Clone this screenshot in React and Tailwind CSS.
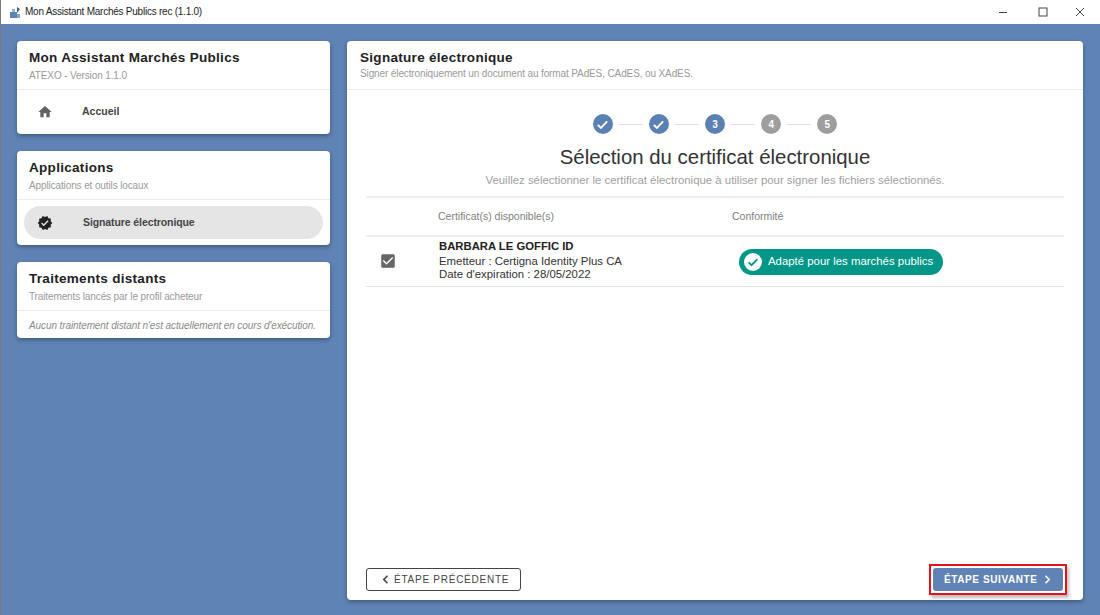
import { useState } from 'react';
import { MdHome, MdVerified, MdCheckBox } from 'react-icons/md';

const steps = [
  { label: '1', done: true },
  { label: '2', done: true },
  { label: '3', active: true },
  { label: '4' },
  { label: '5' },
];

function CardHead({ title, sub }) {
  return (
    <div className="h-[49px] px-3 pt-[8px] border-b border-[#ececec]">
      <p className="text-[13.5px] leading-[18px] font-bold tracking-[0.3px] text-[#222]">{title}</p>
      <p className="text-[10px] leading-[14px] mt-[2px] tracking-[-0.12px] text-[#9a9a9a]">{sub}</p>
    </div>
  );
}

function Check({ size, className }) {
  return (
    <svg width={size} height={size} viewBox="0 0 24 24" className={className}>
      <path d="M4.5 12.5 L9.5 17.5 L19.5 7" fill="none" stroke="currentColor" strokeWidth="3" />
    </svg>
  );
}

function Stepper() {
  return (
    <div className="flex items-center justify-center h-5">
      {steps.map((s, i) => (
        <div key={s.label} className="flex items-center">
          {i > 0 && <div className="w-[24px] mx-[6.1px] h-px bg-[#e0e0e0]" />}
          <div className={`w-5 h-5 rounded-full flex items-center justify-center text-white text-[10px] font-bold ${s.done || s.active ? 'bg-[#5b80b4]' : 'bg-[#9e9e9e]'}`}>
            {s.done ? <Check size={15} /> : s.label}
          </div>
        </div>
      ))}
    </div>
  );
}

function Chevron({ dir }) {
  return (
    <svg width="7" height="9" viewBox="0 0 7 9" className="shrink-0">
      <path d={dir === 'left' ? 'M5.5 .8 L1.8 4.5 L5.5 8.2' : 'M1.5 .8 L5.2 4.5 L1.5 8.2'} fill="none" stroke="currentColor" strokeWidth="1.6" />
    </svg>
  );
}

export default function App() {
  const [checked, setChecked] = useState(true);

  return (
    <div className="w-[1100px] h-[615px] flex flex-col overflow-hidden bg-[#5f83b5] border-l border-[#7a7a7a] font-['Liberation_Sans',Arial,sans-serif]">
      {/* Title bar */}
      <div className="h-[24px] shrink-0 bg-white flex items-center pl-[8px] text-[#222]">
        <svg width="13" height="13" viewBox="0 0 13 13" className="shrink-0">
          <rect x="1" y="6" width="7" height="6" fill="#5f83b5" />
          <rect x="3" y="3" width="3" height="3" fill="#9db4d3" />
          <path d="M8 1 L11 3 L8 7 Z" fill="#3c5f92" />
          <rect x="8" y="8" width="3" height="4" fill="#8aa5ca" />
        </svg>
        <span className="ml-[3px] text-[10px] tracking-[-0.24px] leading-none">Mon Assistant Marchés Publics rec (1.1.0)</span>
        <div className="ml-auto flex items-center text-[#333]">
          <svg width="10" height="10" viewBox="0 0 10 10" className="mr-[30px]"><path d="M1 5.5H9" stroke="#444" strokeWidth="1" /></svg>
          <svg width="10" height="10" viewBox="0 0 10 10" className="mr-[27px]"><rect x="1" y="1" width="8" height="8" fill="none" stroke="#444" strokeWidth="1" /></svg>
          <svg width="10" height="10" viewBox="0 0 10 10" className="mr-[15px]"><path d="M1 1L9 9M9 1L1 9" stroke="#444" strokeWidth="1" /></svg>
        </div>
      </div>

      <div className="flex-1 flex pt-[17px] pb-[15px] pl-[16px] pr-[17px] gap-[17px] min-h-0">
        {/* Left column */}
        <div className="w-[313px] shrink-0 flex flex-col gap-[17px]">
          <div className="h-[93px] bg-white rounded-[4px] shadow-[0_2px_4px_rgba(0,0,0,0.3)]">
            <CardHead title="Mon Assistant Marchés Publics" sub="ATEXO - Version 1.1.0" />
            <div className="h-[44px] flex items-center pl-[20px]">
              <MdHome className="text-[16px] text-[#616161]" />
              <span className="ml-[29px] text-[10.5px] font-bold text-[#444]">Accueil</span>
            </div>
          </div>

          <div className="h-[94px] bg-white rounded-[4px] shadow-[0_2px_4px_rgba(0,0,0,0.3)]">
            <CardHead title="Applications" sub="Applications et outils locaux" />
            <div className="px-[7px] pt-[6px]">
              <div className="h-[33px] rounded-full bg-[#e5e5e5] flex items-center pl-[13px]">
                <MdVerified className="text-[16px] text-[#222]" />
                <span className="ml-[30px] text-[10.5px] tracking-[-0.1px] font-bold text-[#444]">Signature électronique</span>
              </div>
            </div>
          </div>

          <div className="h-[76px] bg-white rounded-[4px] shadow-[0_2px_4px_rgba(0,0,0,0.3)]">
            <CardHead title="Traitements distants" sub="Traitements lancés par le profil acheteur" />
            <p className="px-3 pt-[8px] text-[10px] tracking-[-0.1px] leading-[14px] italic whitespace-nowrap text-[#8a8a8a]">
              Aucun traintement distant n'est actuellement en cours d'exécution.
            </p>
          </div>
        </div>

        {/* Main panel */}
        <div className="w-[736px] h-[559px] bg-white rounded-[4px] shadow-[0_2px_4px_rgba(0,0,0,0.3)] flex flex-col">
          <div className="h-[49px] pl-[13px] pr-3 pt-[8px] border-b border-[#ececec]">
            <p className="text-[13.5px] leading-[18px] font-bold tracking-[0.3px] text-[#222]">Signature électronique</p>
            <p className="text-[10px] leading-[14px] mt-0 tracking-[-0.12px] text-[#9a9a9a]">Signer électroniquement un document au format PAdES, CAdES, ou XAdES.</p>
          </div>

          <div className="flex-1 flex flex-col px-[19px] pt-[24px]">
            <Stepper />
            <h2 className="mt-[10px] text-center text-[20.4px] leading-[26px] text-[#333]">Sélection du certificat électronique</h2>
            <p className="mt-[2px] text-center text-[11.4px] leading-[16px] text-[#a0a0a0]">
              Veuillez sélectionner le certificat électronique à utiliser pour signer les fichiers sélectionnés.
            </p>

            {/* Certificates table */}
            <div className="mt-[8px] border-t-2 border-[#eee] h-[39px] flex items-center text-[10.5px] text-[#808080]">
              <span className="ml-[72px] w-[294px]">Certificat(s) disponible(s)</span>
              <span>Conformité</span>
            </div>
            <div className="border-t-2 border-b border-t-[#eee] border-b-[#e5e5e5] h-[52px] flex items-center">
              <button onClick={() => setChecked(!checked)} className="ml-[13px] w-[18px] flex justify-center -mt-[1px]">
                <MdCheckBox className={`text-[18px] ${checked ? 'text-[#666]' : 'text-[#ccc]'}`} />
              </button>
              <div className="ml-[42px] w-[294px] -mt-[4px] text-[#333] text-[11.4px] leading-[13px]">
                <p className="font-bold text-[#222] text-[11.3px] leading-[14px] mb-[2px]">BARBARA LE GOFFIC ID</p>
                <p>Emetteur : Certigna Identity Plus CA</p>
                <p>Date d'expiration : 28/05/2022</p>
              </div>
              <div className="ml-[6px] h-[26px] w-[204px] rounded-full bg-[#009688] flex items-center pl-[5px] text-white">
                <span className="w-[18px] h-[18px] rounded-full bg-white flex items-center justify-center text-[#009688]">
                  <Check size={14} />
                </span>
                <span className="ml-[6px] text-[11.4px]">Adapté pour les marchés publics</span>
              </div>
            </div>

            {/* Navigation */}
            <div className="mt-auto mb-[9px] flex items-center justify-between">
              <button className="h-[23px] w-[155px] border border-[#444] rounded-[3px] flex items-center pl-[15px] gap-[5px] text-[10px] font-medium tracking-[0.75px] text-[#444]">
                <Chevron dir="left" />
                ÉTAPE PRÉCÉDENTE
              </button>
              <div className="border-2 border-[#e8101c] p-[2px] shadow-[2px_3px_3px_rgba(0,0,0,0.25)] -mr-[3px] -my-[4px]">
                <button className="h-[23px] w-[130px] rounded-[3px] bg-[#5f83b5] flex items-center pl-[11px] gap-[6px] text-[10px] font-bold tracking-[0.6px] text-white">
                  ÉTAPE SUIVANTE
                  <Chevron dir="right" />
                </button>
              </div>
            </div>
          </div>
        </div>
      </div>
    </div>
  );
}
